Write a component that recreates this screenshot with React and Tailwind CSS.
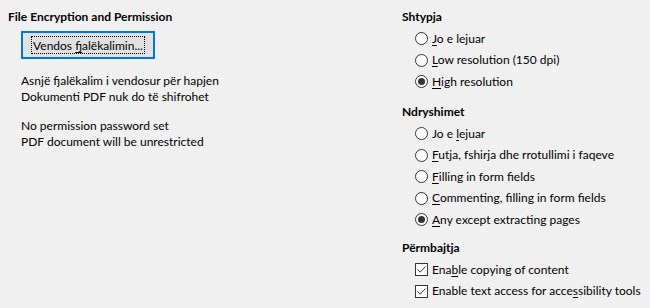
import React from "react";

const Mn = ({ children }) => <span className="underline underline-offset-2">{children}</span>;

const Radio = ({ checked, children }) => (
  <div className="flex h-[21.5px] items-center pl-[13px]">
    <span className="flex h-[13px] w-[13px] shrink-0 items-center justify-center rounded-full border border-[#333333] bg-white">
      {checked && <span className="h-[7px] w-[7px] rounded-full bg-[#333333]" />}
    </span>
    <span className="ml-[4px] whitespace-nowrap">{children}</span>
  </div>
);

const Check = ({ children }) => (
  <div className="flex h-[21.5px] items-center pl-[13px]">
    <span className="flex h-[13px] w-[13px] shrink-0 items-center justify-center border border-[#333333] bg-white">
      <svg viewBox="0 0 11 11" width={11} height={11}>
        <path d="M1.5 5.5 L4.2 8.2 L9.5 2.5" fill="none" stroke="#333333" strokeWidth="1" />
      </svg>
    </span>
    <span className="ml-[4px] whitespace-nowrap">{children}</span>
  </div>
);

const Heading = ({ children, className = "" }) => (
  <div className={"flex h-[22px] items-center whitespace-nowrap font-bold " + className}>{children}</div>
);

export default function App() {
  return (
    <div className="flex h-[308px] w-[650px] bg-[#f0f0f0] pt-[6px] font-[Lato,sans-serif] text-[12px] leading-[16px] text-black">
      <div className="w-[402px] pl-[8px]">
        <Heading>File Encryption and Permission</Heading>
        <button className="ml-[13px] mt-[3px] flex h-[28px] w-[134px] items-center justify-center border-2 border-[#0078d7] bg-[#e1e1e1] px-[8px] py-[3px]">
          <span className="block h-full w-full whitespace-nowrap border border-dotted border-black text-center leading-[18px]">
            Vendos <Mn>f</Mn>jalëkalimin...
          </span>
        </button>
        <div className="ml-[13px] mt-[14px] whitespace-nowrap">
          <p>Asnjë fjalëkalim i vendosur për hapjen</p>
          <p>Dokumenti PDF nuk do të shifrohet</p>
        </div>
        <div className="ml-[13px] mt-[13px] whitespace-nowrap">
          <p>No permission password set</p>
          <p>PDF document will be unrestricted</p>
        </div>
      </div>
      <div className="flex-1">
        <Heading>Shtypja</Heading>
        <Radio><Mn>J</Mn>o e lejuar</Radio>
        <Radio><Mn>L</Mn>ow resolution (150 dpi)</Radio>
        <Radio checked><Mn>H</Mn>igh resolution</Radio>
        <Heading className="mt-[8.5px]">Ndryshimet</Heading>
        <Radio>Jo e <Mn>l</Mn>ejuar</Radio>
        <Radio><Mn>F</Mn>utja, fshirja dhe rrotullimi i faqeve</Radio>
        <Radio><Mn>F</Mn>illing in form fields</Radio>
        <Radio><Mn>C</Mn>ommenting, filling in form fields</Radio>
        <Radio checked><Mn>A</Mn>ny except extracting pages</Radio>
        <Heading className="mt-[6.5px]">Përmbajtja</Heading>
        <Check>Ena<Mn>b</Mn>le copying of content</Check>
        <Check>Enable text access for acce<Mn>s</Mn>sibility tools</Check>
      </div>
    </div>
  );
}
